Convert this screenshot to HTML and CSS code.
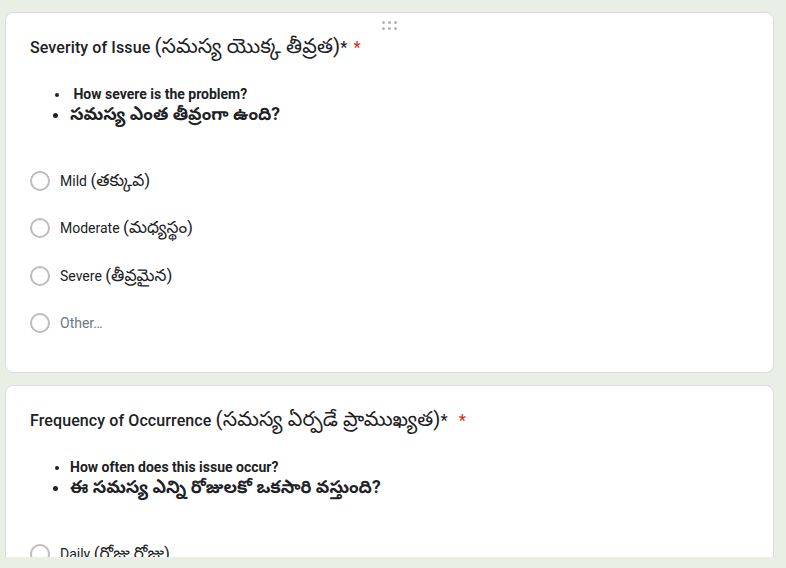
FILE: index.html
```html
<!DOCTYPE html>
<html lang="en">
<head>
<meta charset="utf-8">
<title>Form</title>
<link rel="stylesheet" href="styles.css">
</head>
<body>
<div class="viewport">
  <div class="card card-first">
    <div class="drag-handle">
      <span></span><span></span><span></span><span></span><span></span><span></span>
    </div>
    <div class="q-title">Severity of Issue <span class="tel">(సమస్య యొక్క తీవ్రత)</span>*<span class="req">*</span></div>
    <ul class="q-desc">
      <li class="en">&nbsp;How severe is the problem?</li>
      <li class="te">సమస్య ఎంత తీవ్రంగా ఉంది?</li>
    </ul>
    <div class="options">
      <label class="opt"><span class="radio"></span><span class="opt-label">Mild <span class="tel">(తక్కువ)</span></span></label>
      <label class="opt"><span class="radio"></span><span class="opt-label">Moderate <span class="tel">(మధ్యస్థం)</span></span></label>
      <label class="opt"><span class="radio"></span><span class="opt-label">Severe <span class="tel">(తీవ్రమైన)</span></span></label>
      <label class="opt"><span class="radio"></span><span class="opt-label other">Other…</span></label>
    </div>
  </div>
  <div class="card">
    <div class="q-title">Frequency of Occurrence <span class="tel">(సమస్య ఏర్పడే ప్రాముఖ్యత)</span>*<span class="req req-wide">*</span></div>
    <ul class="q-desc">
      <li class="en">How often does this issue occur?</li>
      <li class="te">ఈ సమస్య ఎన్ని రోజులకో ఒకసారి వస్తుంది?</li>
    </ul>
    <div class="options">
      <label class="opt"><span class="radio"></span><span class="opt-label">Daily <span class="tel">(రోజు రోజు)</span></span></label>
      <label class="opt"><span class="radio"></span><span class="opt-label">Weekly <span class="tel">(వారానికి ఒకసారి)</span></span></label>
    </div>
  </div>
</div>
</body>
</html>
```
FILE: styles.css
```css
html, body {
  margin: 0;
  padding: 0;
  background: #e9efe5;
  font-family: Roboto, "Noto Sans Telugu", "Noto Sans", sans-serif;
  color: #202124;
}

.viewport {
  height: 557px;
  overflow: hidden;
  padding: 12px 12px 0 5px;
  box-sizing: border-box;
  display: flex;
  flex-direction: column;
  gap: 12px;
}

.card {
  position: relative;
  background: #fff;
  border: 1px solid #dadce0;
  border-radius: 8px;
  padding: 23px 24px 37px 24px;
  flex: none;
}

.drag-handle {
  position: absolute;
  top: 8px;
  left: 50%;
  margin-left: -8px;
  width: 16px;
  display: grid;
  grid-template-columns: repeat(3, 3px);
  column-gap: 3px;
  row-gap: 3px;
}

.drag-handle span {
  width: 3px;
  height: 3px;
  border-radius: 50%;
  background: #b5b5b5;
}

.q-title {
  font-size: 16px;
  font-weight: 500;
  line-height: 24px;
  letter-spacing: 0.1px;
}

.q-title .tel {
  font-size: 20.5px;
  font-weight: 400;
  line-height: 0;
}

.req {
  color: #d93025;
  margin-left: 6px;
}

.req-wide {
  margin-left: 11px;
}

.q-desc {
  margin: 24px 0 0 0;
  padding-left: 40px;
  font-weight: 700;
}

.q-desc li.en {
  font-size: 14px;
  line-height: 20px;
}

.q-desc li.te {
  font-size: 17.5px;
  line-height: 20px;
}

.options {
  margin-top: 45px;
  display: flex;
  flex-direction: column;
  gap: 23.4px;
}

.opt {
  display: flex;
  align-items: center;
  gap: 10px;
  height: 24px;
  font-size: 14px;
}

.radio {
  width: 16px;
  height: 16px;
  border: 2px solid #bdbdbd;
  border-radius: 50%;
  flex: none;
}

.opt-label {
  line-height: 20px;
}

.opt-label .tel {
  font-size: 17px;
  line-height: 0;
}

.opt-label.other {
  color: #6b7785;
}
```
